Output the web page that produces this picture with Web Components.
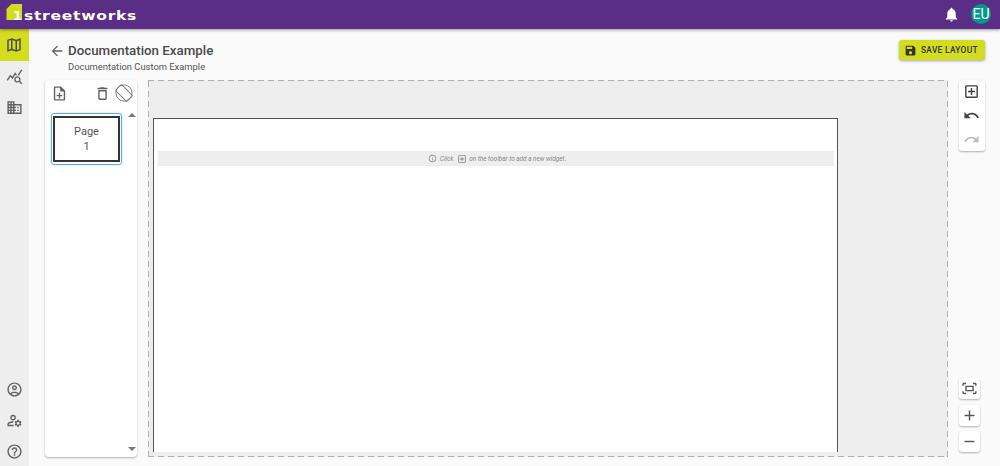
<!doctype html>
<html lang="en">
<head>
<meta charset="utf-8">
<title>Documentation Example</title>
<style>
  html, body { margin: 0; height: 100%; overflow: hidden; background: #fafafa; font-family: Roboto, "Liberation Sans", sans-serif; }
</style>
</head>
<body>
<app-shell>
  <top-bar slot="top"></top-bar>
  <side-nav slot="side"></side-nav>
  <page-heading slot="heading" title-text="Documentation Example" sub-text="Documentation Custom Example"></page-heading>
  <save-button slot="heading">SAVE LAYOUT</save-button>
  <pages-panel slot="pages"></pages-panel>
  <layout-canvas slot="canvas"></layout-canvas>
  <tool-rail slot="tools"></tool-rail>
</app-shell>

<script>
const ICONS = {
  map: 'M20.5 3l-.16.03L15 5.1 9 3 3.36 4.9c-.21.07-.36.25-.36.48V20.5c0 .28.22.5.5.5l.16-.03L9 18.9l6 2.1 5.64-1.9c.21-.07.36-.25.36-.48V3.5c0-.28-.22-.5-.5-.5zM10 5.47l4 1.4v11.66l-4-1.4V5.47zm-5 .99l3-1.01v11.7l-3 1.16V6.46zm14 11.08l-3 1.01V6.86l3-1.16v11.84z',
  stats: 'M19.88 18.47c.44-.7.7-1.51.7-2.39 0-2.49-2.01-4.5-4.5-4.5s-4.5 2.01-4.5 4.5 2.01 4.5 4.49 4.5c.88 0 1.7-.26 2.39-.7L21.58 23 23 21.58l-3.12-3.11zm-3.8.11c-1.38 0-2.5-1.12-2.5-2.5s1.12-2.5 2.5-2.5 2.5 1.12 2.5 2.5-1.12 2.5-2.5 2.5zm-.36-8.5c-.74.02-1.45.18-2.1.45l-.55-.83-3.8 6.18-3.01-3.52-3.63 5.81L1 17l5-8 3 3.5L13 6l2.72 4.08zm2.59.5c-.64-.28-1.33-.45-2.05-.49L21.38 2 23 3.18l-4.69 7.4z',
  domain: 'M12 7V3H2v18h20V7H12zM6 19H4v-2h2v2zm0-4H4v-2h2v2zm0-4H4V9h2v2zm0-4H4V5h2v2zm4 12H8v-2h2v2zm0-4H8v-2h2v2zm0-4H8V9h2v2zm0-4H8V5h2v2zm10 12h-8v-2h2v-2h-2v-2h2v-2h-2V9h8v10zm-2-8h-2v2h2v-2zm0 4h-2v2h2v-2z',
  account: 'M12 2C6.48 2 2 6.48 2 12s4.48 10 10 10 10-4.48 10-10S17.52 2 12 2zM7.35 18.5C8.66 17.56 10.26 17 12 17s3.34.56 4.65 1.5c-1.31.94-2.91 1.5-4.65 1.5s-3.34-.56-4.65-1.5zm10.79-1.38C16.45 15.8 14.32 15 12 15s-4.45.8-6.14 2.12C4.7 15.73 4 13.95 4 12c0-4.42 3.58-8 8-8s8 3.58 8 8c0 1.95-.7 3.73-1.86 5.12zM12 6c-1.93 0-3.5 1.57-3.5 3.5S10.07 13 12 13s3.5-1.57 3.5-3.5S13.93 6 12 6zm0 5c-.83 0-1.5-.67-1.5-1.5S11.17 8 12 8s1.5.67 1.5 1.5S12.83 11 12 11z',
  manage: 'M4 18v-.65c0-.34.16-.66.41-.81C6.1 15.53 8.03 15 10 15c.03 0 .05 0 .08.01.1-.7.3-1.37.59-1.98-.22-.02-.44-.03-.67-.03-2.42 0-4.68.67-6.61 1.82-.88.52-1.39 1.5-1.39 2.53V20h9.26c-.42-.6-.75-1.28-.97-2H4zM10 12c2.21 0 4-1.79 4-4s-1.79-4-4-4-4 1.79-4 4 1.79 4 4 4zm0-6c1.1 0 2 .9 2 2s-.9 2-2 2-2-.9-2-2 .9-2 2-2zM20.75 16c0-.22-.03-.42-.06-.63l1.14-1.01-1-1.73-1.45.49c-.32-.27-.68-.48-1.08-.63L18 11h-2l-.3 1.49c-.4.15-.76.36-1.08.63l-1.45-.49-1 1.73 1.14 1.01c-.03.21-.06.41-.06.63s.03.42.06.63l-1.14 1.01 1 1.73 1.45-.49c.32.27.68.48 1.08.63L16 21h2l.3-1.49c.4-.15.76-.36 1.08-.63l1.45.49 1-1.73-1.14-1.01c.03-.21.06-.41.06-.63zM17 18c-1.1 0-2-.9-2-2s.9-2 2-2 2 .9 2 2-.9 2-2 2z',
  help: 'M11 18h2v-2h-2v2zm1-16C6.48 2 2 6.48 2 12s4.48 10 10 10 10-4.48 10-10S17.52 2 12 2zm0 18c-4.41 0-8-3.59-8-8s3.59-8 8-8 8 3.59 8 8-3.59 8-8 8zm0-14c-2.21 0-4 1.79-4 4h2c0-1.1.9-2 2-2s2 .9 2 2c0 2-3 1.75-3 5h2c0-2.25 3-2.5 3-5 0-2.21-1.79-4-4-4z',
  back: 'M20 11H7.83l5.59-5.59L12 4l-8 8 8 8 1.41-1.41L7.83 13H20v-2z',
  bell: 'M12 22c1.1 0 2-.9 2-2h-4c0 1.1.89 2 2 2zm6-6v-5c0-3.07-1.64-5.64-4.5-6.32V4c0-.83-.67-1.5-1.5-1.5s-1.5.67-1.5 1.5v.68C7.63 5.36 6 7.92 6 11v5l-2 2v1h16v-1l-2-2z',
  save: 'M17 3H5c-1.11 0-2 .9-2 2v14c0 1.1.89 2 2 2h14c1.1 0 2-.9 2-2V7l-4-4zm-5 16c-1.66 0-3-1.34-3-3s1.34-3 3-3 3 1.34 3 3-1.34 3-3 3zm3-10H5V5h10v4z',
  noteadd: 'M13 11h-2v3H8v2h3v3h2v-3h3v-2h-3zm1-9H6c-1.1 0-2 .9-2 2v16c0 1.1.89 2 1.99 2H18c1.1 0 2-.9 2-2V8l-6-6zm4 18H6V4h7v5h5v11z',
  trash: 'M16 9v10H8V9h8m-1.5-6h-5l-1 1H5v2h14V4h-3.5l-1-1zM18 7H6v12c0 1.1.9 2 2 2h8c1.1 0 2-.9 2-2V7z',
  addbox: 'M19 3H5c-1.11 0-2 .9-2 2v14c0 1.1.89 2 2 2h14c1.1 0 2-.9 2-2V5c0-1.1-.9-2-2-2zm0 16H5V5h14v14zm-8-2h2v-4h4v-2h-4V7h-2v4H7v2h4z',
  undo: 'M12.5 8c-2.65 0-5.05.99-6.9 2.6L2 7v9h9l-3.62-3.62c1.39-1.16 3.16-1.88 5.12-1.88 3.54 0 6.55 2.31 7.6 5.5l2.37-.78C21.08 11.03 17.15 8 12.5 8z',
  redo: 'M18.4 10.6C16.55 8.99 14.15 8 11.5 8c-4.65 0-8.58 3.03-9.96 7.22L3.9 16c1.05-3.19 4.05-5.5 7.6-5.5 1.95 0 3.73.72 5.12 1.88L13 16h9V7l-3.6 3.6z',
  fit: 'M17 4h3c1.1 0 2 .9 2 2v2h-2V6h-3V4zM4 8V6h3V4H4c-1.1 0-2 .9-2 2v2h2zm16 8v2h-3v2h3c1.1 0 2-.9 2-2v-2h-2zM7 18H4v-2H2v2c0 1.1.9 2 2 2h3v-2zM18 8H6v8h12V8zm-2 6H8v-4h8v4z',
  plus: 'M19 13h-6v6h-2v-6H5v-2h6V5h2v6h6v2z',
  minus: 'M19 13H5v-2h14v2z',
  info: 'M11 7h2v2h-2zm0 4h2v6h-2zm1-9C6.48 2 2 6.48 2 12s4.48 10 10 10 10-4.48 10-10S17.52 2 12 2zm0 18c-4.41 0-8-3.59-8-8s3.59-8 8-8 8 3.59 8 8-3.59 8-8 8z'
};

class BaseElement extends HTMLElement {
  constructor() {
    super();
    this.attachShadow({ mode: 'open' }).innerHTML = this.markup();
  }
}

class MatIcon extends HTMLElement {
  connectedCallback() {
    const size = this.getAttribute('size') || 18;
    const color = this.getAttribute('color') || 'currentColor';
    const name = this.getAttribute('name');
    const root = this.shadowRoot || this.attachShadow({ mode: 'open' });
    const body = name === 'rotate'
      ? `<g fill="none" stroke="${color}" stroke-width="1.3"><circle cx="12" cy="12" r="10.8"/><rect x="6.4" y="1.4" width="11.2" height="21.2" rx="1.4" transform="rotate(-45 12 12)"/></g>`
      : `<path fill="${color}" d="${ICONS[name]}"/>`;
    root.innerHTML = `<style>:host{display:inline-flex;flex:none;width:${size}px;height:${size}px}svg{display:block;width:100%;height:100%}</style>
      <svg viewBox="0 0 24 24">${body}</svg>`;
  }
}

class AppShell extends BaseElement {
  markup() {
    return `<style>
      :host { display: grid; grid-template: 29px 1fr / 29px 1fr; height: 466px; width: 1000px; }
      .top { grid-column: 1 / 3; position: relative; z-index: 2; }
      .main { display: flex; flex-direction: column; min-width: 0; min-height: 0; padding: 0 15px 9px 16px; }
      .head { display: flex; justify-content: space-between; height: 51px; flex: none; }
      .body { display: flex; flex: 1; min-height: 0; }
      ::slotted([slot=canvas]) { margin: 0 11px; }
    </style>
    <div class="top"><slot name="top"></slot></div>
    <slot name="side"></slot>
    <div class="main">
      <div class="head"><slot name="heading"></slot></div>
      <div class="body"><slot name="pages"></slot><slot name="canvas"></slot><slot name="tools"></slot></div>
    </div>`;
  }
}

class TopBar extends BaseElement {
  markup() {
    return `<style>
      :host { display: flex; align-items: center; height: 29px; background: #5a2d87; box-shadow: 0 1px 3px rgba(0,0,0,.4); color: #fff; padding: 0 8px 0 6px; }
      .logo { display: flex; align-items: flex-start; height: 24px; padding-top: 5px; margin-top: -3px; }
      svg.mark { width: 17px; height: 20px; display: block; flex: none; }
      .word { display: inline-block; font: 700 12.5px/17px "DejaVu Sans", sans-serif; letter-spacing: .6px; margin-left: 1px; transform-origin: left center; transform: scaleX(1.24); padding-top: 3px; }
      .right { margin-left: auto; display: flex; align-items: center; gap: 11px; }
      .avatar { width: 20px; height: 20px; border-radius: 50%; background: #00998a; font: 400 14px/20px Roboto, sans-serif; text-align: center; margin: -1px 1px 0 0; }
    </style>
    <div class="logo">
      <svg class="mark" viewBox="0 0 17 20">
        <polygon points="0.5,5 5.5,0 16,0 16,16 0.5,16" fill="#d4dc1e"/>
        <text x="11.5" y="15.6" text-anchor="middle" font-family="DejaVu Sans" font-weight="700" font-size="13" fill="#fff">1</text>
      </svg>
      <span class="word">streetworks</span>
    </div>
    <div class="right">
      <mat-icon name="bell" size="17" color="#fff"></mat-icon>
      <div class="avatar">EU</div>
    </div>`;
  }
}

class SideNav extends BaseElement {
  markup() {
    return `<style>
      :host { display: flex; flex-direction: column; background: #eeeeee; width: 29px; height: 437px; }
      .item { display: flex; align-items: center; justify-content: center; height: 31px; color: #616161; flex: none; }
      .item.active { background: #d4dc1e; color: #4f4f4f; height: 32px; padding-right: 1px; box-sizing: border-box; }
      .spacer { flex: 1; }
      .bottom { margin-bottom: -1px; }
    </style>
    <div class="item active"><mat-icon name="map" size="18"></mat-icon></div>
    <div class="item"><mat-icon name="stats" size="17"></mat-icon></div>
    <div class="item"><mat-icon name="domain" size="17"></mat-icon></div>
    <div class="spacer"></div>
    <div class="bottom">
      <div class="item"><mat-icon name="account" size="17"></mat-icon></div>
      <div class="item"><mat-icon name="manage" size="17"></mat-icon></div>
      <div class="item"><mat-icon name="help" size="17"></mat-icon></div>
    </div>`;
  }
}

class PageHeading extends BaseElement {
  markup() {
    return `<style>
      :host { display: grid; grid-template-columns: 16px auto; column-gap: 3px; align-content: start; padding: 12px 0 0 4px; color: #4a4a4a; }
      mat-icon { color: #616161; align-self: center; }
      h1 { margin: 0; font: 500 13.3px/20px Roboto, sans-serif; }
      p { grid-column: 2; margin: 0; font: 400 9.4px/12px Roboto, sans-serif; color: #555; }
    </style>
    <mat-icon name="back" size="16"></mat-icon>
    <h1></h1>
    <p></p>`;
  }
  connectedCallback() {
    this.shadowRoot.querySelector('h1').textContent = this.getAttribute('title-text');
    this.shadowRoot.querySelector('p').textContent = this.getAttribute('sub-text');
  }
}

class SaveButton extends BaseElement {
  markup() {
    return `<style>
      :host { display: inline-flex; align-items: center; align-self: flex-start; gap: 4px; box-sizing: border-box; margin-top: 11px; width: 86px; height: 20px; padding-left: 5px; background: #d4dc1e; border-radius: 3px; box-shadow: 0 1px 3px rgba(0,0,0,.35); color: #333; font: 500 8.4px Roboto, sans-serif; letter-spacing: .3px; white-space: nowrap; }
    </style>
    <mat-icon name="save" size="13"></mat-icon><slot></slot>`;
  }
}

class PagesPanel extends BaseElement {
  markup() {
    return `<style>
      :host { display: flex; flex-direction: column; width: 92px; flex: none; background: #fff; border-radius: 4px; box-shadow: 0 1px 2px rgba(0,0,0,.3); position: relative; color: #616161; }
      .tools { display: flex; align-items: center; height: 24px; padding: 1px 4px 0 6px; flex: none; }
      .gap { flex: 1; }
      .list { flex: 1; display: flex; align-items: flex-start; min-height: 0; padding: 8px 0 0 6px; }
      .thumb { box-sizing: border-box; width: 71px; height: 52px; border: 1px solid #5aaee8; box-shadow: 0 0 2px rgba(90,174,232,.6); border-radius: 3px; padding: 2px 1px; }
      .inner { box-sizing: border-box; height: 100%; border: 2px solid #333; background: #fff; display: flex; flex-direction: column; align-items: center; justify-content: center; font: 400 11px/15px Roboto, sans-serif; color: #555; }
      .bar { position: absolute; right: 0; top: 32px; bottom: 0; width: 10px; display: flex; flex-direction: column; justify-content: space-between; align-items: center; padding: 0 0 6px; }
      .up, .down { width: 0; height: 0; border-left: 4px solid transparent; border-right: 4px solid transparent; }
      .up { border-bottom: 4px solid #777; margin-top: 1px; }
      .down { border-top: 4px solid #777; }
    </style>
    <div class="tools">
      <mat-icon name="noteadd" size="17"></mat-icon>
      <span class="gap"></span>
      <mat-icon name="trash" size="17"></mat-icon>
      <mat-icon name="rotate" size="18" color="#808080" style="margin-left:4px"></mat-icon>
    </div>
    <div class="list"><div class="thumb"><div class="inner"><span>Page</span><span>1</span></div></div></div>
    <div class="bar"><span class="up"></span><span class="down"></span></div>`;
  }
}

class LayoutCanvas extends BaseElement {
  markup() {
    return `<style>
      :host {
        display: flex; flex: 1; min-width: 0; box-sizing: border-box; padding: 38px 110px 5px 5px;
        background-color: #eeeeee;
        background-image:
          repeating-linear-gradient(90deg, #b0b0b0 0 6px, transparent 6px 10px),
          repeating-linear-gradient(90deg, #b0b0b0 0 6px, transparent 6px 10px),
          repeating-linear-gradient(0deg, #b0b0b0 0 6px, transparent 6px 10px),
          repeating-linear-gradient(0deg, #b0b0b0 0 6px, transparent 6px 10px);
        background-size: 100% 1px, 100% 1px, 1px 100%, 1px 100%;
        background-position: top, bottom, left, right;
        background-repeat: no-repeat;
      }
      .page { flex: 1; box-sizing: border-box; background: #fff; border: 1px solid #555; border-bottom: 0; padding: 32px 3px 0 4px; }
      .hint { height: 15px; background: #eeeeee; display: flex; align-items: center; justify-content: center; color: #888; font: italic 400 6.4px Roboto, sans-serif; }
      .hint .i1 { margin: 0 3px 0 2px; }
      .hint .i2 { margin: 0 2px 0 4px; }
    </style>
    <div class="page">
      <div class="hint">
        <mat-icon class="i1" name="info" size="9"></mat-icon><span>Click</span><mat-icon class="i2" name="addbox" size="10"></mat-icon><span>on the toolbar to add a new widget.</span>
      </div>
    </div>`;
  }
}

class ToolRail extends BaseElement {
  markup() {
    return `<style>
      :host { display: flex; flex-direction: column; width: 26px; flex: none; padding-bottom: 5px; box-sizing: border-box; color: #424242; }
      .group { display: flex; flex-direction: column; align-items: center; background: #fff; border-radius: 3px; box-shadow: 0 1px 2px rgba(0,0,0,.3); height: 71px; padding: 3px 1px 0 0; box-sizing: border-box; }
      .group mat-icon + mat-icon { margin-top: 7px; }
      .spacer { flex: 1; }
      .btn { width: 21px; height: 21px; background: #fff; border-radius: 3px; box-shadow: 0 1px 2px rgba(0,0,0,.3); display: flex; align-items: center; justify-content: center; color: #555; }
      .btn + .btn { margin-top: 5px; }
      .btn.fit + .btn { margin-top: 6px; }
    </style>
    <div class="group">
      <mat-icon name="addbox" size="17"></mat-icon>
      <mat-icon name="undo" size="17"></mat-icon>
      <mat-icon name="redo" size="17" color="#bdbdbd"></mat-icon>
    </div>
    <div class="spacer"></div>
    <div class="btn fit"><mat-icon name="fit" size="17"></mat-icon></div>
    <div class="btn"><mat-icon name="plus" size="17"></mat-icon></div>
    <div class="btn"><mat-icon name="minus" size="17"></mat-icon></div>`;
  }
}

customElements.define('mat-icon', MatIcon);
customElements.define('top-bar', TopBar);
customElements.define('side-nav', SideNav);
customElements.define('page-heading', PageHeading);
customElements.define('save-button', SaveButton);
customElements.define('pages-panel', PagesPanel);
customElements.define('layout-canvas', LayoutCanvas);
customElements.define('tool-rail', ToolRail);
customElements.define('app-shell', AppShell);
</script>
</body>
</html>
